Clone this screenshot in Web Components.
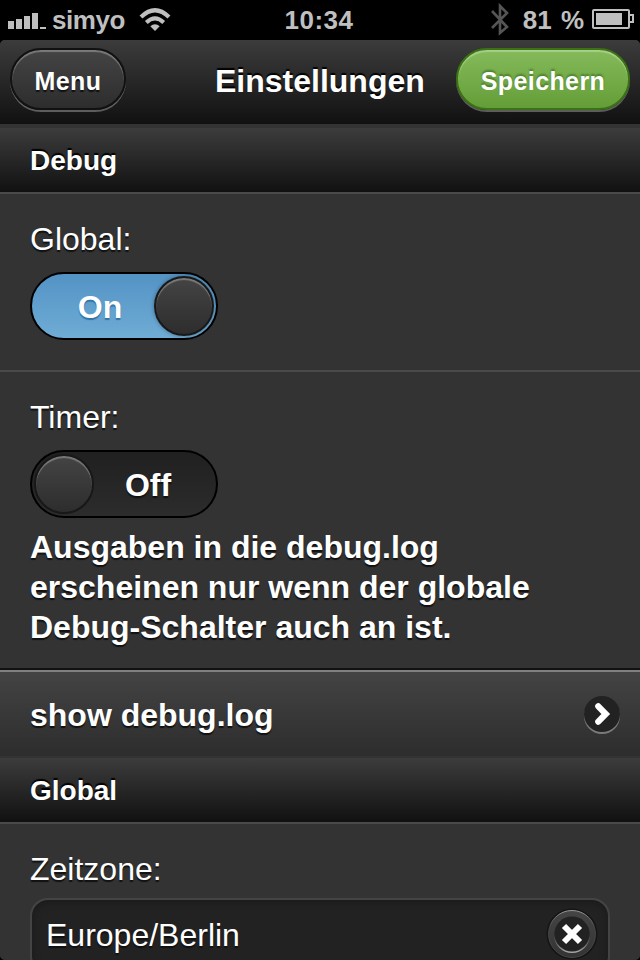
<!DOCTYPE html>
<html lang="de">
<head>
<meta charset="utf-8">
<title>Einstellungen</title>
<style>
html,body{margin:0;height:100%;background:#000;overflow:hidden}
body{font-family:"Liberation Sans",Arial,Helvetica,sans-serif;color:#fff}
</style>
</head>
<body>
<settings-app></settings-app>
<script>
function define(name, html) {
  const t = document.createElement('template');
  t.innerHTML = html;
  customElements.define(name, class extends HTMLElement {
    constructor() {
      super();
      this.attachShadow({ mode: 'open' }).appendChild(t.content.cloneNode(true));
    }
  });
}

define('status-bar', `<style>
:host{display:grid;grid-template-columns:1fr auto 1fr;height:40px;background:#000;color:#bfbfbf;font-weight:bold;font-size:26px;line-height:40px;white-space:nowrap}
div{display:flex;align-items:flex-start}
svg{flex:none;display:block}
.l{padding-left:8px}.l span{margin-left:6px;letter-spacing:-.45px}.l .wifi{margin-left:14px}
.r{justify-content:flex-end;padding-right:6px}
.p{margin-left:14px;word-spacing:2px}.bat{margin-left:7px}
.t{letter-spacing:.5px;margin-left:-2px}
</style>
<div class="l">
<svg width="38" height="40" fill="#bfbfbf"><path d="M0 21h6v8H0zM8 19h6v10H8zM16 16h6v13h-6zM24 13h6v16h-6zM32 27h6v2h-6z"/></svg>
<span>simyo</span>
<svg class="wifi" width="32" height="40" viewBox="0 0 32 40" fill="none" stroke="#bfbfbf"><path d="M2 17Q16 3.500 30 17" stroke-width="4.200"/><path d="M7.300 22.500Q16 14.200 24.700 22.500" stroke-width="4"/><path d="M16 31l-4.700-4.700q4.700-4.300 9.400 0z" fill="#bfbfbf" stroke="none"/></svg>
</div>
<div class="t">10:34</div>
<div class="r">
<svg width="18" height="40" fill="none" stroke="#555" stroke-width="2.600"><path d="M1 11l15 16-7 6V6l7 7L1 28"/></svg>
<span class="p">81 %</span>
<svg class="bat" width="43" height="40" fill="none" stroke="#bfbfbf" stroke-width="2"><rect x="2" y="10" width="36" height="18" rx="1"/><path d="M39 15h3v7h-3"/><path d="M5 13h26v12H5z" fill="#bfbfbf" stroke="none"/></svg>
</div>`);

define('pill-button', `<style>
:host{display:flex;box-sizing:border-box;align-items:center;justify-content:center;height:62px;border:2px solid #111;border-radius:32px;font-weight:bold;font-size:25px;line-height:30px;letter-spacing:.4px;background:linear-gradient(#444,#2d2d2d);box-shadow:0 2px 0 rgba(255,255,255,.3),inset 0 2px 1px rgba(255,255,255,.3);text-shadow:0 2px 1px #111}
:host([kind=go]){border-color:#3b7314;background:linear-gradient(#85ba5a,#649e38);text-shadow:0 -2px 2px #4c7e2d}
span{padding-top:4px}
</style><span><slot></slot></span>`);

define('title-bar', `<style>
:host{display:grid;grid-template-columns:116px 1fr 174px;height:84px;box-sizing:border-box;padding:8px 10px 0;background:linear-gradient(#3c3c3c,#111)}
h1{margin:0;padding:13px 0 0 89px;font-size:32px;line-height:40px;text-shadow:0 -2px 1px #000;white-space:nowrap}
</style><slot name="left"></slot><h1><slot></slot></h1><slot name="right"></slot>`);

define('list-divider', `<style>
:host{display:block;box-sizing:border-box;height:66px;padding:16px 30px 0;border-bottom:2px solid #4a4a4a;background:linear-gradient(#3c3c3c,#111);font-weight:bold;font-size:28px;line-height:34px;text-shadow:0 -2px 1px #000}
</style><slot></slot>`);

define('field-row', `<style>
:host{display:block;padding:25px 30px 0;box-sizing:border-box;background:#333;text-shadow:0 2px 1px #111;font-size:32px;line-height:40px}
.c{padding-top:var(--control-gap,13px)}
</style><slot name="label"></slot><div class="c"><slot></slot></div>`);

define('flip-switch', `<style>
:host{display:flex;box-sizing:border-box;align-items:center;width:188px;height:68px;border:2px solid #000;border-radius:34px;padding:0 2px;font-weight:bold;font-size:32px;background:linear-gradient(#202020,#2c2c2c)}
:host([on]){flex-direction:row-reverse;background:linear-gradient(#5393c5,#6facd5);text-shadow:0 2px 1px #3373a5}
i{box-sizing:border-box;flex:none;width:60px;height:60px;border:2px solid #181818;border-radius:50%;background:linear-gradient(#444,#2d2d2d);box-shadow:inset 0 2px 1px rgba(255,255,255,.3)}
:host([on]) i{box-shadow:inset 0 2px 1px rgba(255,255,255,.3),0 0 4px rgba(0,0,0,.35)}
span{flex:1;text-align:center;padding:2px 12px 0 0}
:host([on]) span{padding:2px 0 0 12px}
</style><i></i><span><slot></slot></span>`);

define('link-row', `<style>
:host{display:flex;box-sizing:border-box;height:88px;border-top:2px solid #111;padding:0 20px 0 30px;justify-content:space-between;background:linear-gradient(#444,#2d2d2d);box-shadow:inset 0 2px 0 #808080;font-size:32px;line-height:40px;font-weight:bold;text-shadow:0 2px 1px #111}
span{padding-top:25px}svg{margin-top:26px}
</style><span><slot></slot></span>
<svg width="36" height="38"><circle cx="18" cy="20" r="18" fill="#7b7b7b"/><circle cx="18" cy="18" r="18" fill="#222"/><path d="M14.300 10.300l7.500 7.700-7.500 7.700" fill="none" stroke="#fff" stroke-width="6.200" stroke-linecap="round" stroke-linejoin="miter"/></svg>`);

define('clear-field', `<style>
:host{display:flex;box-sizing:border-box;justify-content:space-between;height:76px;width:580px;border:2px solid #444;border-radius:18px;background:#222;box-shadow:inset 0 2px 8px rgba(0,0,0,.25);padding:0 10px 0 14px}
span{padding-top:15px}svg{margin-top:6px}
</style><span><slot></slot></span>
<svg width="54" height="56"><defs><linearGradient id="b" x2="0" y2="1"><stop stop-color="#454545"/><stop offset="1" stop-color="#333"/></linearGradient><linearGradient id="h" x2="0" y2="1"><stop stop-color="#999"/><stop offset=".35" stop-color="#444"/></linearGradient><linearGradient id="r" x2="0" y2="1"><stop offset=".5" stop-color="#333"/><stop offset="1" stop-color="#aaa"/></linearGradient></defs>
<circle cx="28" cy="28" r="25.500" fill="#151515"/><circle cx="28" cy="28" r="23.500" fill="url(#b)" stroke="url(#h)"/><circle cx="28" cy="29" r="18" fill="url(#r)"/><circle cx="28" cy="28" r="17.500" fill="#222"/><path d="M20 20l16 16M36 20L20 36" stroke="#fff" stroke-width="6"/></svg>`);

define('settings-app', `<style>
:host{display:block;height:960px;overflow:hidden}
main{display:flex;flex-direction:column;height:920px;overflow:hidden;border-radius:5px;background:#333}
main>*{flex:none}
list-divider.first{margin-top:4px}
list-divider.next{margin-top:2px}
.a{height:178px;border-bottom:2px solid #4a4a4a}
.b{height:296px}
.note{font-weight:bold;margin:9px 0 0}
.c{height:150px;--control-gap:9px}
</style>
<status-bar></status-bar>
<main>
<title-bar><pill-button slot="left">Menu</pill-button>Einstellungen<pill-button slot="right" kind="go">Speichern</pill-button></title-bar>
<list-divider class="first">Debug</list-divider>
<field-row class="a"><span slot="label">Global:</span><flip-switch on>On</flip-switch></field-row>
<field-row class="b"><span slot="label">Timer:</span><flip-switch>Off</flip-switch><p class="note">Ausgaben in die debug.log<br>erscheinen nur wenn der globale<br>Debug-Schalter auch an ist.</p></field-row>
<link-row>show debug.log</link-row>
<list-divider class="next">Global</list-divider>
<field-row class="c"><span slot="label">Zeitzone:</span><clear-field>Europe/Berlin</clear-field></field-row>
</main>`);
</script>
</body>
</html>
